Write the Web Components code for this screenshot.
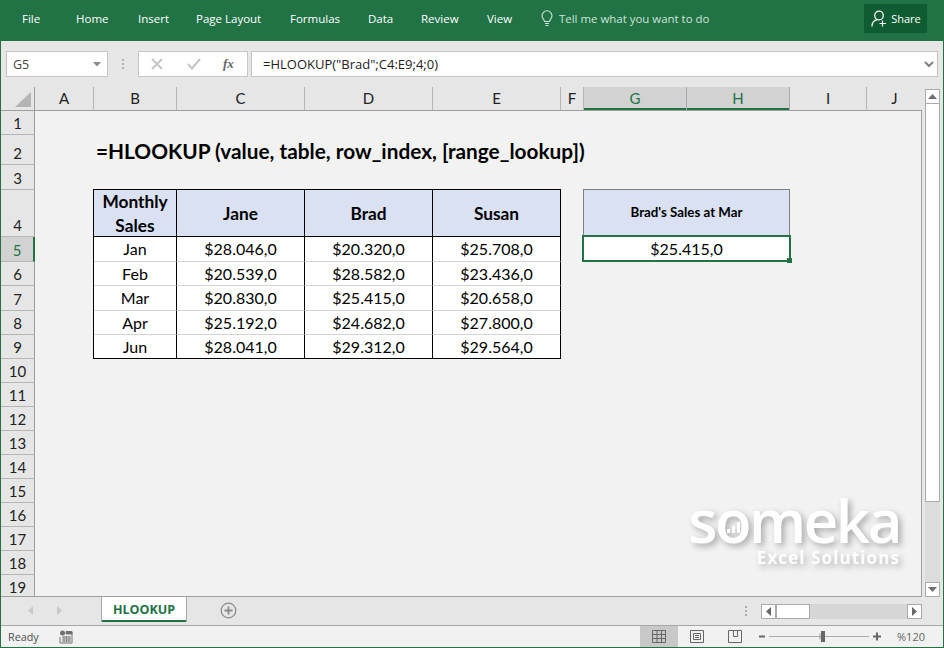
<!DOCTYPE html>
<html><head><meta charset="utf-8">
<style>
html,body{margin:0;padding:0;background:#e6e6e6}
body{width:944px;height:648px;overflow:hidden}
</style></head>
<body>
<excel-window></excel-window>
<template id="rib">
<style>
:host{display:flex;height:41px;background:#217346;color:#fff;font:11.500px "Open Sans",sans-serif;align-items:center;box-sizing:border-box}
.t{flex:none;display:block;padding-bottom:5px}
.tell{display:flex;align-items:center;gap:5px;color:#cfe3d8;padding-bottom:5px;font-size:11.450px}
.share{margin-left:auto;margin-right:17px;margin-bottom:4px;width:63px;height:29px;background:#0f5c32;display:flex;align-items:center;justify-content:center;gap:4px;box-sizing:border-box;padding-left:1px;font-size:11px}
</style>
<span class="t" style="margin-left:22px;width:54px">File</span>
<span class="t" style="width:62px">Home</span>
<span class="t" style="width:58px">Insert</span>
<span class="t" style="width:94px">Page Layout</span>
<span class="t" style="width:78px">Formulas</span>
<span class="t" style="width:53px">Data</span>
<span class="t" style="width:66px">Review</span>
<span class="t" style="width:53px">View</span>
<span class="tell"><svg width="14" height="17" viewBox="0 0 14 17" fill="none" stroke="#cfe3d8" stroke-width="1.1"><path d="M4.500 11.500C4.300 9.500 2 8.500 2 5.800a5 5 0 0 1 10 0C12 8.500 9.700 9.500 9.500 11.500zM5 13.500h4M5.500 15.500h3"/></svg>Tell me what you want to do</span>
<span class="share"><svg width="16" height="17" viewBox="0 0 16 17" fill="none" stroke="#fff" stroke-width="1.200"><circle cx="8" cy="5.500" r="4.300"/><path d="M1 16.500c0-3.600 2.200-6.200 5.500-6.800M11.500 10.500v6M8.500 13.500H15"/></svg>Share</span>
</template>
<template id="fb">
<style>
:host{display:flex;height:46px;background:#e6e6e6;padding:10px 5px 0;box-sizing:border-box;align-items:flex-start;font:13px "Open Sans",sans-serif;color:#222}
.box{background:#fff;border:1px solid #c6c6c6;height:26px;box-sizing:border-box;display:flex;align-items:center}
.name{flex:none;width:102px;padding:0 6px 0 6px;justify-content:space-between;font-size:12.500px;color:#444}
.dots{width:30px;display:flex;flex-direction:column;align-items:center;gap:2px;padding-top:8px;flex:none}
.dots i{width:2px;height:2px;background:#b0b0b0;display:block}
.ic{flex:none;width:110px;padding-left:12px}
.f{flex:1;margin-left:3px;padding-left:11px;position:relative}
.fx{font:italic bold 13px "Liberation Serif",serif;color:#666;margin-left:22px}
</style>
<div class="box name"><span>G5</span><svg width="8" height="5"><path d="M0 0h8L4 4.500z" fill="#8a8a8a"/></svg></div>
<div class="dots"><i></i><i></i><i></i></div>
<div class="box ic">
<svg width="12" height="12" viewBox="0 0 12 12" style="margin-right:24px"><path d="M1 1l10 10M11 1L1 11" stroke="#c4c4c4" stroke-width="1.800"/></svg>
<svg width="14" height="12" viewBox="0 0 14 12"><path d="M1 6l4 4.500L13 1" stroke="#c4c4c4" stroke-width="2" fill="none"/></svg>
<span class="fx">fx</span>
</div>
<div class="box f">=HLOOKUP("Brad";C4:E9;4;0)<svg style="position:absolute;right:3px;top:9px" width="10" height="7" viewBox="0 0 10 7"><path d="M1 1l4 4 4-4" stroke="#808080" stroke-width="2" fill="none"/></svg></div>
</template>
<template id="sheet">
<style>
:host{display:block;height:510px;background:#f2f2f2;flex:1;min-width:0}
.g{display:grid;grid-template-columns:34px 1fr;grid-template-rows:24px 1fr;height:100%}
.corner{background:#e6e6e6;border-right:1px solid #9e9e9e;border-bottom:1px solid #9e9e9e;box-sizing:border-box;position:relative}
.corner svg{position:absolute;right:3px;bottom:3px}
.cols{display:flex;background:#e6e6e6;border-bottom:1px solid #9e9e9e;box-sizing:border-box;height:24px;overflow:hidden}
.col{flex:none;box-sizing:border-box;border-right:1px solid #b5b5b5;text-align:center;font:15px/23px Lato,sans-serif;color:#222;height:23px}
.col.s{background:#d2d2d2;color:#217346;box-shadow:inset 0 -2px 0 #217346;border-right-color:#aaa}
.col:last-child{border-right:0}
.rows{background:#e6e6e6;display:flex;flex-direction:column;overflow:hidden;border-bottom:1px solid #9e9e9e}
.row{flex:none;box-sizing:border-box;border-right:1px solid #9e9e9e;border-bottom:1px solid #b5b5b5;display:flex;justify-content:center;align-items:flex-end;font:15px/22px Lato,sans-serif;color:#222}
.row.s{background:#d2d2d2;color:#217346;border-right:2px solid #217346}
.row:last-child{border-bottom:0;line-height:20px}
.body{overflow:hidden;border-right:1px solid #9e9e9e;border-bottom:1px solid #9e9e9e}
</style>
<div class="g">
<div class="corner"><svg width="16" height="15"><path d="M16 0v15H0z" fill="#b4b4b4"/></svg></div>
<div class="cols" id="cols"></div>
<div class="rows" id="rows"></div>
<div class="body"><slot></slot></div>
</div>
</template>
<template id="cv">
<style>
:host{display:grid;grid-template-columns:59px 83px 128px 128px 128px 23px 103px 103px;grid-template-rows:24px 30px 25px 47px 25px 24px 25px 24px 24px;font:16px Lato,sans-serif;color:#000;width:800px}
.title{grid-row:2;grid-column:2/9;font:bold 20.800px/28px Lato,sans-serif;white-space:nowrap;display:flex;align-items:flex-end;padding-left:2px}
.tbl{grid-row:4/10;grid-column:2/6;display:grid;grid-template-columns:subgrid;grid-template-rows:subgrid;border-top:1px solid #000;border-left:1px solid #000;margin:-1px 0 0 -1px}
.c{display:flex;align-items:center;justify-content:center;text-align:center;box-sizing:border-box;background:#fff;border-right:1px solid #000;border-bottom:1px solid #d4d4d4;font-size:16px;padding-bottom:1px}
.h{background:#d9e1f2;font-weight:700;border-bottom:1px solid #000;line-height:24px;font-size:17.300px;padding-bottom:0;padding-top:1px}
.l{border-bottom:1px solid #000}
.bh{grid-row:4;grid-column:7/9;background:#d9e1f2;border:1px solid #7f7f7f;border-bottom:0;margin:-1px 0 0 -1px;box-sizing:border-box;display:flex;align-items:center;justify-content:center;font-weight:700;font-size:13.300px;padding-bottom:3px}
.bv{grid-row:5;grid-column:7/9;background:#fff;border:2px solid #217346;margin:-2px -1px 0 -2px;box-sizing:border-box;display:flex;align-items:center;justify-content:center;font-size:16px;position:relative}
.bv::after{content:"";position:absolute;right:-3px;bottom:-3px;width:5px;height:5px;background:#217346}
</style>
<div class="title">=HLOOKUP (value, table, row_index, [range_lookup])</div>
<div class="tbl" id="tbl"></div>
<div class="bh">Brad's Sales at Mar</div>
<div class="bv">$25.415,0</div>
</template>
<template id="logo">
<style>
:host{position:absolute;left:680px;top:480px;width:220px;height:90px;color:#fff;pointer-events:none;filter:drop-shadow(3px 3px 3px rgba(0,0,0,.3))}
.a{font:600 60px/60px "Open Sans",sans-serif;letter-spacing:-2.500px;position:absolute;right:0;top:10px;white-space:nowrap}
.b{font:700 17px/18px "Open Sans",sans-serif;letter-spacing:1.100px;position:absolute;right:0;top:69px;white-space:nowrap;opacity:.9}
svg{position:absolute;left:47px;top:42px}
</style>
<span class="a">someka</span>
<svg width="13" height="11" viewBox="0 0 13 11"><path d="M0 7h3v4H0zM5 4h3v7H5zM10 0h3v11h-3z" fill="#fff"/></svg>
<span class="b">Excel Solutions</span>
</template>
<template id="scr">
<style>
:host{display:block;flex:none;width:21px;background:#e6e6e6;box-sizing:border-box;padding:2px 3px 0;height:510px}
.b{height:15px;background:#fff;border:1px solid #ababab;box-sizing:border-box;display:flex;align-items:center;justify-content:center}
.t{height:398px;background:#fff;border:1px solid #ababab;border-top:0;box-sizing:border-box}
.tr{height:80px;background:#dcdcdc}
</style>
<div class="b"><svg width="9" height="5"><path d="M4.500 0L9 5H0z" fill="#707070"/></svg></div>
<div class="t"></div>
<div class="tr"></div>
<div class="b"><svg width="9" height="5"><path d="M4.500 5L9 0H0z" fill="#707070"/></svg></div>
</template>
<template id="tabs">
<style>
:host{display:flex;height:29px;background:#e6e6e6;border-bottom:1px solid #a8a8a8;box-sizing:border-box;align-items:flex-start;position:relative}
.nav{display:flex;gap:23px;margin-left:27px;margin-top:9px;width:73px}
.tab{width:86px;height:25px;background:#fff;border:solid #a8a8a8;border-width:0 1px;box-shadow:inset 0 -2px 0 #217346;box-sizing:border-box;color:#217346;font:bold 12.500px/25px "Open Sans",sans-serif;text-align:center}
.add{margin-left:33px;margin-top:5px}
.dots{position:absolute;left:744px;top:9px;display:flex;flex-direction:column;gap:2px}
.dots i{width:2px;height:2px;background:#aaa;display:block}
.sb{position:absolute;left:760px;top:7px;width:161px;height:15px;background:#d6d6d6;display:flex;justify-content:space-between}
.btn{width:15px;height:15px;background:#fff;border:1px solid #ababab;box-sizing:border-box;display:flex;align-items:center;justify-content:center}
.th{position:absolute;left:15px;top:0;width:34px;height:15px;background:#fff;border:1px solid #ababab;box-sizing:border-box}
</style>
<div class="nav"><svg width="6" height="9"><path d="M5 0v9L0 4.500z" fill="#c8c8c8"/></svg><svg width="6" height="9"><path d="M0 0v9l5-4.500z" fill="#c8c8c8"/></svg></div>
<div class="tab">HLOOKUP</div>
<svg class="add" width="17" height="17" viewBox="0 0 17 17" fill="none" stroke="#8a8a8a"><circle cx="8.500" cy="8.500" r="7.300" stroke-width="1.200"/><path d="M4.500 8.500h8M8.500 4.500v8" stroke-width="1.800"/></svg>
<div class="dots"><i></i><i></i><i></i></div>
<div class="sb"><div class="btn"><svg width="6" height="9"><path d="M5 0v9L0 4.500z" fill="#666"/></svg></div><div class="th"></div><div class="btn"><svg width="6" height="9"><path d="M0 0v9l5-4.500z" fill="#666"/></svg></div></div>
</template>
<template id="status">
<style>
:host{display:flex;height:21px;background:#f1f1f1;align-items:center;font:10.800px "Open Sans",sans-serif;color:#505050;box-sizing:border-box;padding-left:7px}
.mac{margin-left:20px}
.right{margin-left:auto;height:21px;display:flex;align-items:center;width:303px}
.v{flex:none;width:38px;height:21px;display:flex;align-items:center;justify-content:center}
.v.on{background:#c8c8c8}
.z{flex:none;margin-left:5px;height:13px}
.pct{font-size:11px;margin-left:16px;color:#666}
</style>
<span>Ready</span>
<svg class="mac" width="14" height="14" viewBox="0 0 14 14"><circle cx="3.500" cy="3" r="2.500" fill="#707070"/><path d="M7 1.500h6V13H1V7" fill="none" stroke="#707070"/><path d="M7 2h6v2H7zM3 7h9M3 9h9M3 11h9M5 6v6M7.500 6v6M10 6v6" stroke="#707070" stroke-width=".8" fill="#707070"/></svg>
<div class="right">
<div class="v on"><svg width="14" height="13" viewBox="0 0 14 13" fill="none" stroke="#666"><path d="M.5.500h13v12H.5zM.5 4.500h13M.5 8.500h13M5 .5v12M9.500.500v12"/></svg></div>
<div class="v"><svg width="14" height="13" viewBox="0 0 14 13" fill="none" stroke="#666"><path d="M.5.500h13v12H.5zM3.500 3.500h7v6h-7zM5 5.500h4M5 7.500h4"/></svg></div>
<div class="v"><svg width="14" height="13" viewBox="0 0 14 13" fill="none" stroke="#666"><path d="M.5.500h13v12H.5zM5.500.500v6h4V.5"/></svg></div>
<svg class="z" width="122" height="13" viewBox="0 0 122 13"><path d="M0 6.500h6" stroke="#666" stroke-width="2"/><path d="M10 6.500h100" stroke="#aaa"/><path d="M61 3.500v6" stroke="#999"/><rect x="62" y="1" width="4" height="11" fill="#666"/><path d="M114 6.500h8M118 2.500v8" stroke="#666" stroke-width="2"/></svg>
<span class="pct">%120</span>
</div>
</template>
<script>
function def(n,id,init){customElements.define(n,class extends HTMLElement{constructor(){super();const s=this.attachShadow({mode:'open'});s.appendChild(document.getElementById(id).content.cloneNode(true));if(init)init(s)}})}
def('rib-bar','rib');def('formula-bar','fb');def('some-logo','logo');def('v-scroll','scr');def('tab-strip','tabs');def('status-bar','status');
def('sheet-view','sheet',s=>{
[['A',59],['B',83],['C',128],['D',128],['E',128],['F',23],['G',103,1],['H',103,1],['I',77],['J',55]].forEach(([t,w,k])=>{const d=document.createElement('div');d.className='col'+(k?' s':'');d.style.width=w+'px';d.textContent=t;s.getElementById('cols').appendChild(d)});
[24,30,25,47,25,24,25,24,24,24,24,24,24,24,24,24,24,24,22].forEach((h,i)=>{const d=document.createElement('div');d.className='row'+(i==4?' s':'');d.style.height=h+'px';d.textContent=i+1;s.getElementById('rows').appendChild(d)});
});
def('sheet-canvas','cv',s=>{
const data=[['Monthly<br>Sales','Jane','Brad','Susan'],['Jan','$28.046,0','$20.320,0','$25.708,0'],['Feb','$20.539,0','$28.582,0','$23.436,0'],['Mar','$20.830,0','$25.415,0','$20.658,0'],['Apr','$25.192,0','$24.682,0','$27.800,0'],['Jun','$28.041,0','$29.312,0','$29.564,0']];
data.forEach((r,i)=>r.forEach(x=>{const d=document.createElement('div');d.className='c'+(i==0?' h':i==5?' l':'');d.innerHTML=x;s.getElementById('tbl').appendChild(d)}));
});
customElements.define('excel-window',class extends HTMLElement{constructor(){super();const s=this.attachShadow({mode:'open'});s.innerHTML=`<style>:host{display:block;width:944px;height:648px;background:#e6e6e6}.w{border:solid #217346;border-width:0 1px 1px;height:607px;box-sizing:border-box}.m{display:flex;height:510px}</style>
<rib-bar></rib-bar><div class="w"><formula-bar></formula-bar>
<div class="m"><sheet-view><sheet-canvas></sheet-canvas></sheet-view><v-scroll></v-scroll></div>
<tab-strip></tab-strip><status-bar></status-bar></div><some-logo></some-logo>`;}});
</script>
</body></html>
